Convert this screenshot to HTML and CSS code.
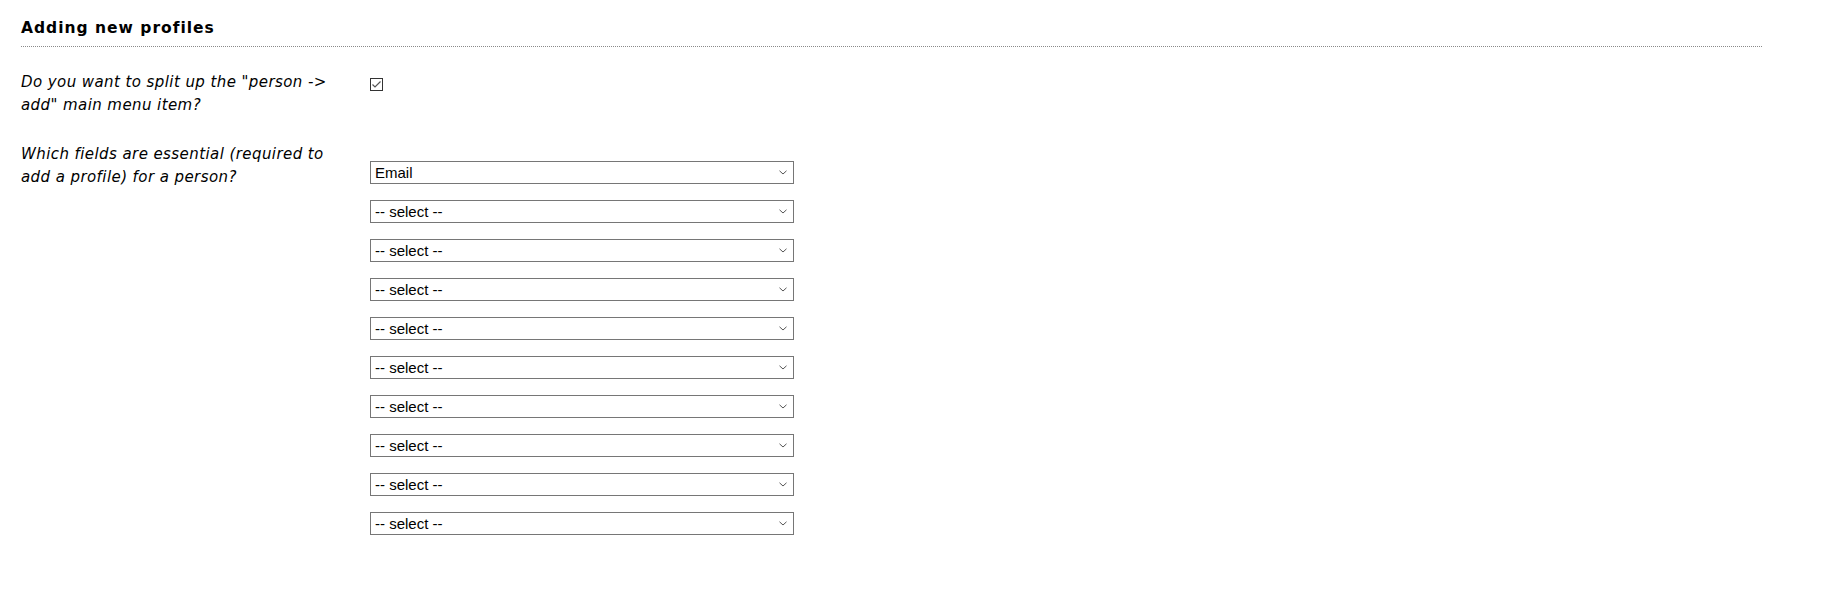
FILE: index.html
```html
<!DOCTYPE html>
<html lang="en">
<head>
<meta charset="utf-8">
<title>Adding new profiles</title>
<link rel="stylesheet" href="styles.css">
</head>
<body>
<div class="section">
  <h2 class="section-title">Adding new profiles</h2>
  <div class="form-row">
    <label class="row-label" for="split">Do you want to split up the "person -&gt; add" main menu item?</label>
    <div class="row-control">
      <input type="checkbox" id="split" class="check" checked>
    </div>
  </div>
  <div class="form-row">
    <label class="row-label">Which fields are essential (required to add a profile) for a person?</label>
    <div class="row-control select-list">
      <select class="field-select"><option>Email</option></select>
      <select class="field-select"><option>-- select --</option></select>
      <select class="field-select"><option>-- select --</option></select>
      <select class="field-select"><option>-- select --</option></select>
      <select class="field-select"><option>-- select --</option></select>
      <select class="field-select"><option>-- select --</option></select>
      <select class="field-select"><option>-- select --</option></select>
      <select class="field-select"><option>-- select --</option></select>
      <select class="field-select"><option>-- select --</option></select>
      <select class="field-select"><option>-- select --</option></select>
    </div>
  </div>
</div>
</body>
</html>
```

FILE: styles.css
```css
html, body {
  margin: 0;
  padding: 0;
  background: #fff;
}

body {
  font-family: "DejaVu Sans", Verdana, sans-serif;
  color: #000;
}

.section {
  margin: 0 59px 0 21px;
  padding-top: 19px;
}

.section-title {
  margin: 0;
  font-size: 15.5px;
  line-height: 18px;
  font-weight: bold;
  letter-spacing: 1px;
  padding-bottom: 9px;
  border-bottom: 1px dotted #8a8a8a;
}

.form-row {
  display: grid;
  grid-template-columns: 349px 1fr;
  align-items: start;
}

.section-title + .form-row {
  margin-top: 24px;
}

.form-row + .form-row {
  margin-top: 26px;
}

.row-label {
  font-size: 15px;
  line-height: 23px;
  font-style: italic;
  letter-spacing: 0.42px;
  padding-right: 24px;
}

.row-control {
  display: flex;
  flex-direction: column;
  align-items: flex-start;
}

.check {
  appearance: none;
  -webkit-appearance: none;
  margin: 7px 0 0 0;
  width: 13px;
  height: 13px;
  border: 1px solid #333;
  border-radius: 0;
  background: #fff url("data:image/svg+xml,%3Csvg xmlns='http://www.w3.org/2000/svg' width='11' height='11' viewBox='0 0 11 11'%3E%3Cpath d='M1.5 5.5 L4 8 L9.5 2.5' fill='none' stroke='%23555' stroke-width='1.2'/%3E%3C/svg%3E") no-repeat center / 11px 11px;
}

.select-list {
  padding-top: 18px;
  gap: 16px;
}

.field-select {
  appearance: none;
  -webkit-appearance: none;
  box-sizing: border-box;
  width: 424px;
  height: 23px;
  margin: 0;
  padding: 0 20px 0 4px;
  border: 1px solid #767676;
  border-radius: 0;
  font-family: "Liberation Sans", Arial, sans-serif;
  font-size: 15px;
  color: #000;
  background: #fff url("data:image/svg+xml,%3Csvg xmlns='http://www.w3.org/2000/svg' width='8' height='5' viewBox='0 0 8 5'%3E%3Cpath d='M0.5 0.8 L4 4 L7.5 0.8' fill='none' stroke='%23555' stroke-width='1'/%3E%3C/svg%3E") no-repeat right 6px center / 8px 5px;
}
```
